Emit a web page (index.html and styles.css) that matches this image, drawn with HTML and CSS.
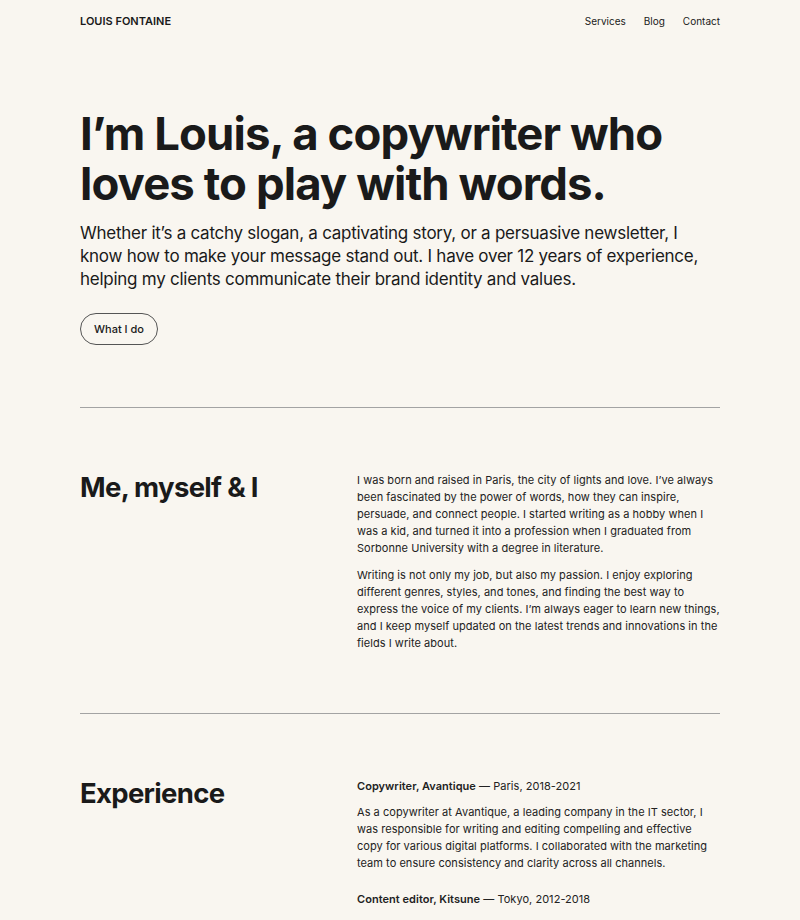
FILE: index.html
```html
<!DOCTYPE html>
<html lang="en">
<head>
<meta charset="utf-8">
<title>Louis Fontaine</title>
<link rel="stylesheet" href="styles.css">
</head>
<body>
<div class="page">
  <header class="site-header">
    <div class="brand">LOUIS FONTAINE</div>
    <nav class="nav">
      <a href="#">Services</a>
      <a href="#">Blog</a>
      <a href="#">Contact</a>
    </nav>
  </header>

  <section class="hero">
    <h1>I’m Louis, a copywriter who loves to play with words.</h1>
    <p class="lead">Whether it’s a catchy slogan, a captivating story, or a persuasive newsletter, I know how to make your message stand out. I have over 12 years of experience, helping my clients communicate their brand identity and values.</p>
    <a class="btn" href="#">What I do</a>
  </section>

  <hr class="divider">

  <section class="split">
    <h2>Me, myself &amp; I</h2>
    <div class="body">
      <p>I was born and raised in Paris, the city of lights and love. I’ve always been fascinated by the power of words, how they can inspire, persuade, and connect people. I started writing as a hobby when I was a kid, and turned it into a profession when I graduated from Sorbonne University with a degree in literature.</p>
      <p>Writing is not only my job, but also my passion. I enjoy exploring different genres, styles, and tones, and finding the best way to express the voice of my clients. I’m always eager to learn new things, and I keep myself updated on the latest trends and innovations in the fields I write about.</p>
    </div>
  </section>

  <hr class="divider">

  <section class="split">
    <h2>Experience</h2>
    <div class="body">
      <div class="job">
        <p class="job-title"><strong>Copywriter, Avantique</strong> — Paris, 2018-2021</p>
        <p>As a copywriter at Avantique, a leading company in the IT sector, I was responsible for writing and editing compelling and effective copy for various digital platforms. I collaborated with the marketing team to ensure consistency and clarity across all channels.</p>
      </div>
      <div class="job">
        <p class="job-title"><strong>Content editor, Kitsune</strong> — Tokyo, 2012-2018</p>
      </div>
    </div>
  </section>
</div>
</body>
</html>
```

FILE: styles.css
```css
* { box-sizing: border-box; }
html, body { margin: 0; padding: 0; }
body {
  background: #f9f6f0;
  color: #1a1a1a;
  font-family: Inter, "Noto Sans", sans-serif;
}
.page {
  width: 640px;
  margin: 0 auto;
}
.site-header {
  display: flex;
  justify-content: space-between;
  align-items: center;
  height: 42px;
}
.brand {
  font-size: 11px;
  font-weight: 600;
}
.nav {
  display: flex;
  gap: 18px;
}
.nav a {
  font-size: 10px;
  color: #1a1a1a;
  text-decoration: none;
}
.hero {
  padding-top: 67px;
  padding-bottom: 62px;
}
.hero h1 {
  margin: 0 0 13px;
  font-size: 45.5px;
  line-height: 50px;
  font-weight: 700;
  letter-spacing: -0.02em;
}
.lead {
  margin: 0 0 22px;
  font-size: 17px;
  line-height: 23px;
  letter-spacing: -0.015em;
}
.btn {
  display: flex;
  width: fit-content;
  align-items: center;
  height: 32px;
  padding: 0 13px;
  border: 1px solid #555;
  border-radius: 16px;
  font-size: 11px;
  font-weight: 500;
  color: #1a1a1a;
  text-decoration: none;
}
.divider {
  margin: 0;
  border: 0;
  border-top: 1px solid #a3a3a3;
}
.split {
  display: grid;
  grid-template-columns: 277px 1fr;
  padding: 64px 0 61px;
}
.split h2 {
  margin: 0;
  font-size: 27.5px;
  line-height: 30px;
  font-weight: 700;
  letter-spacing: -0.025em;
}
.body p {
  margin: 0 0 10px;
  font-size: 11px;
  line-height: 17px;
  letter-spacing: 0.04px;
  color: #222;
}
.body p:last-child { margin-bottom: 0; }
.job { margin-bottom: 19px; }
.job:last-child { margin-bottom: 0; }
.job .job-title { margin-bottom: 9px; }
.job .job-title:last-child { margin-bottom: 0; }
.job-title strong { font-weight: 600; }
```
